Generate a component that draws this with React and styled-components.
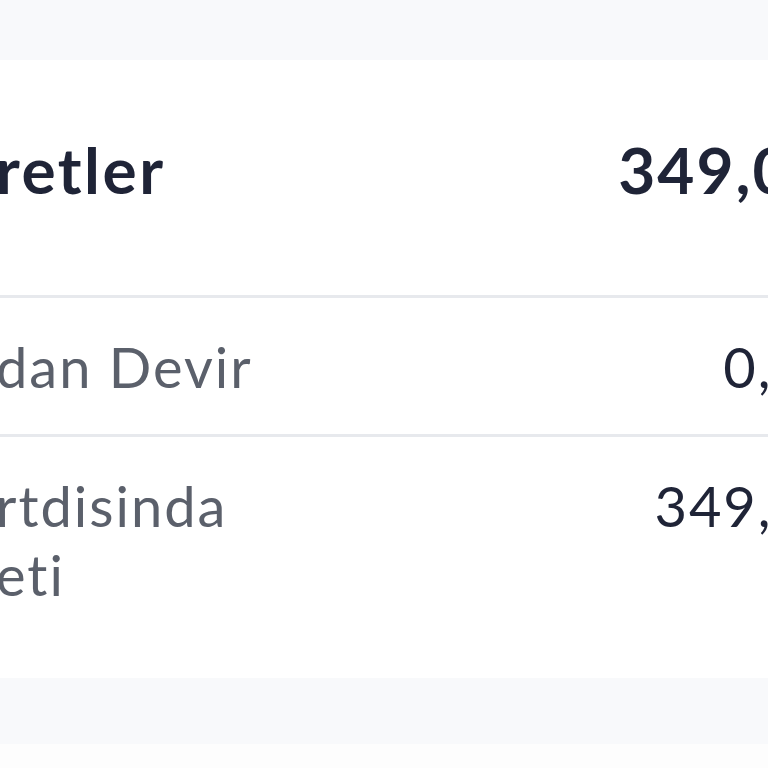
import React from "react";
import styled, { createGlobalStyle } from "styled-components";

const GlobalStyle = createGlobalStyle`
    html, body {
        margin: 0;
        padding: 0;
        background: #fdfdfd;
        overflow: hidden;
    }
    body {
        font-family: Lato, "Noto Sans", "Liberation Sans", sans-serif;
        font-variant-ligatures: none;
    }
`;

const Page = styled.div`
    width: 768px;
    height: 768px;
    display: flex;
    flex-direction: column;
    overflow: hidden;
`;

const TopBand = styled.div`
    height: 60px;
    flex-shrink: 0;
    background: #f8f9fb;
`;

//card runs past both edges of the window, like the cropped reference
const Card = styled.section`
    background: #ffffff;
    padding-bottom: 36px;
    margin-right: -154px;
    margin-left: -4px;
`;

const Row = styled.div`
    display: flex;
    align-items: flex-start;
    justify-content: space-between;
    padding: ${(p) => (p.$head ? "71px 0 87px" : "34px 0 33px")};
    border-top: ${(p) => (p.$head ? "none" : "3px solid #e7e9ed")};
`;

const Label = styled.div`
    font-size: ${(p) => (p.$head ? "64px" : "56px")};
    font-weight: ${(p) => (p.$head ? 700 : 400)};
    line-height: ${(p) => (p.$head ? "77px" : "69px")};
    letter-spacing: ${(p) => (p.$head ? "2.5px" : "2px")};
    color: ${(p) => (p.$head ? "#1f2437" : "#5b606b")};
    white-space: pre-line;
`;

const Value = styled.div`
    font-size: ${(p) => (p.$head ? "64px" : "56px")};
    font-weight: ${(p) => (p.$head ? 700 : 400)};
    line-height: ${(p) => (p.$head ? "77px" : "69px")};
    letter-spacing: 2px;
    color: #1f2437;
    text-align: right;
    white-space: nowrap;
`;

const BottomBand = styled.div`
    height: 66px;
    flex-shrink: 0;
    background: #f8f9fb;
`;

const rows = [
    { label: "dan Devir", value: "0,00 TL" },
    { label: "rtdisinda\neti", value: "349,00 TL" },
];

export default function App() {
    return (
        <Page>
            <GlobalStyle />
            <TopBand />
            <Card>
                <Row $head>
                    <Label $head>retler</Label>
                    <Value $head>349,00 TL</Value>
                </Row>
                {rows.map((r) => (
                    <Row key={r.label}>
                        <Label>{r.label}</Label>
                        <Value>{r.value}</Value>
                    </Row>
                ))}
            </Card>
            <BottomBand />
        </Page>
    );
}
